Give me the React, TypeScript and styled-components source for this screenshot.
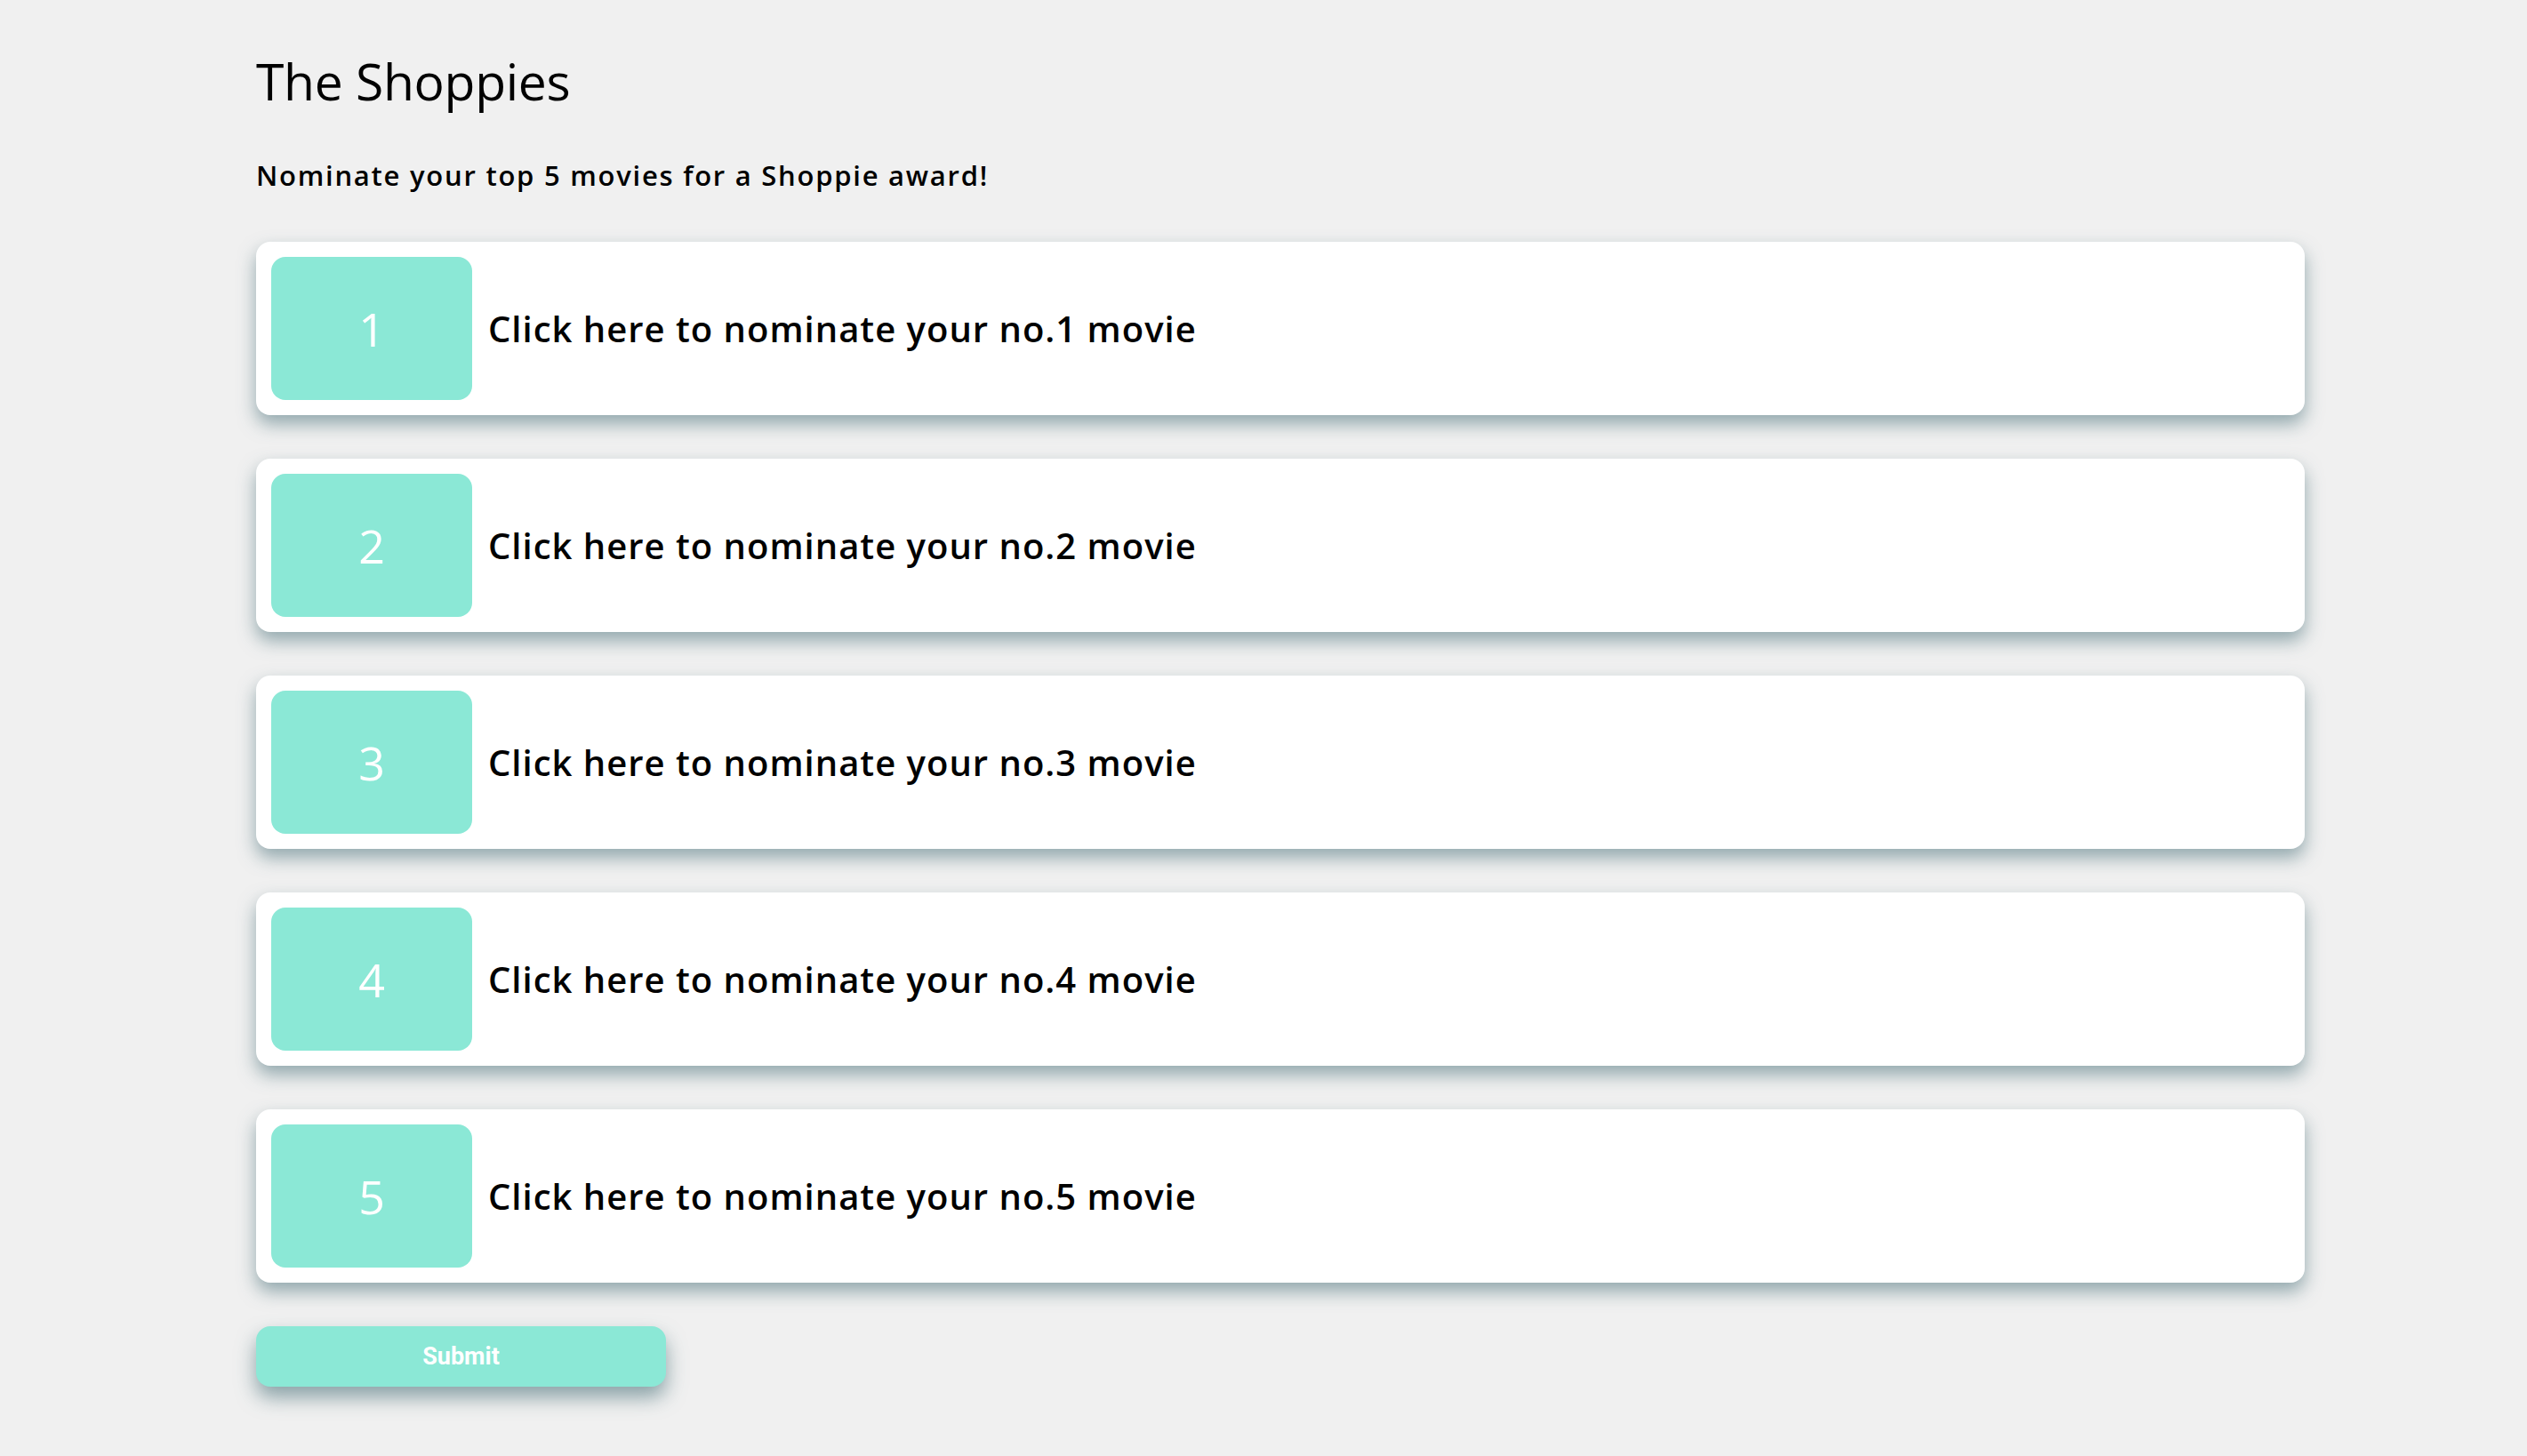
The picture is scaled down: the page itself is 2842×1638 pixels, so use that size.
import React from 'react';
import styled, { createGlobalStyle } from 'styled-components';

const GlobalStyle = createGlobalStyle`
    html, body {
        margin: 0;
        padding: 0;
        background: #f0f0f0;
    }

    body {
        font-family: 'Open Sans', 'Noto Sans', sans-serif;
        color: #000;
    }
`;

const Page = styled.div`
    width: 2304px;
    margin-left: 288px;
    padding-top: 51px;
    padding-bottom: 60px;
`;

const Title = styled.h1`
    margin: 0;
    font-size: 57px;
    font-weight: 400;
    line-height: 80px;
    letter-spacing: -0.3px;
`;

const Subtitle = styled.p`
    margin: 46px 0 55px;
    font-size: 31px;
    font-weight: 600;
    line-height: 40px;
    letter-spacing: 1.75px;
`;

const NomineeList = styled.div`
    display: flex;
    flex-direction: column;
    gap: 49px;
`;

const NomineeCard = styled.div`
    display: flex;
    align-items: center;
    gap: 18px;
    height: 195px;
    box-sizing: border-box;
    padding: 17px;
    background: #fff;
    border-radius: 16px;
    box-shadow: 0 10px 20px rgba(70, 110, 118, 0.55);
    cursor: pointer;
`;

const RankBox = styled.div`
    flex: 0 0 226px;
    height: 161px;
    display: flex;
    align-items: center;
    justify-content: center;
    background: #8be8d6;
    border-radius: 16px;
    color: #fff;
    font-size: 52px;
    font-weight: 400;
`;

const NomineeText = styled.span`
    font-size: 40px;
    font-weight: 600;
    letter-spacing: 1px;
`;

const SubmitButton = styled.button`
    display: block;
    margin-top: 49px;
    width: 461px;
    height: 68px;
    border: none;
    border-radius: 16px;
    background: #8be8d6;
    color: #fff;
    font-family: Roboto, 'Liberation Sans', sans-serif;
    font-size: 27px;
    font-weight: 700;
    box-shadow: 0 12px 22px rgba(70, 110, 118, 0.6);
    cursor: pointer;
`;

const ranks = [1, 2, 3, 4, 5];

const App: React.FC = () => {
    return (
        <>
            <GlobalStyle />
            <Page>
                <Title>The Shoppies</Title>
                <Subtitle>Nominate your top 5 movies for a Shoppie award!</Subtitle>
                <NomineeList>
                    {ranks.map((rank) => (
                        <NomineeCard key={rank}>
                            <RankBox>{rank}</RankBox>
                            <NomineeText>Click here to nominate your no.{rank} movie</NomineeText>
                        </NomineeCard>
                    ))}
                </NomineeList>
                <SubmitButton>Submit</SubmitButton>
            </Page>
        </>
    );
};

export default App;
